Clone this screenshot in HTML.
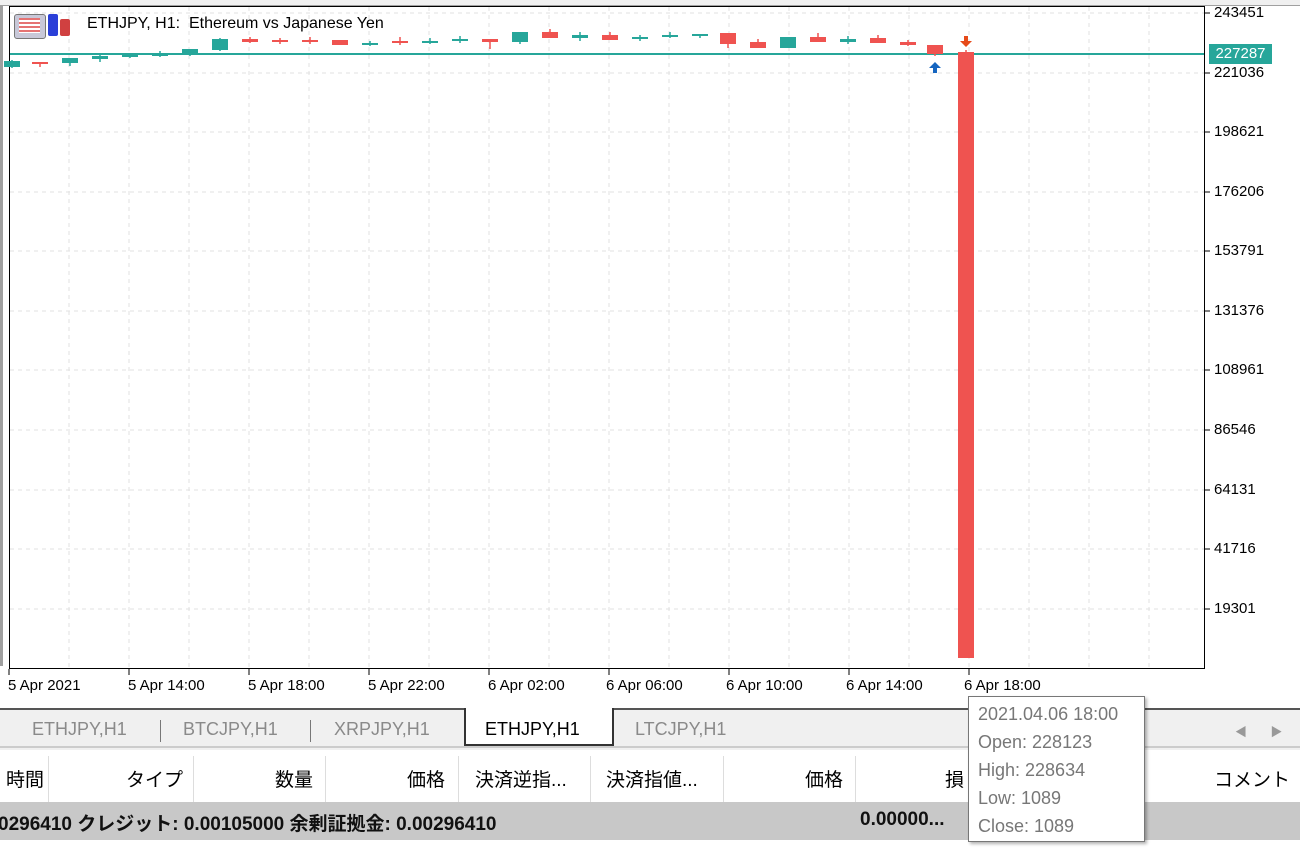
<!DOCTYPE html><html><head><meta charset="utf-8"><style>
body{margin:0;width:1300px;height:849px;overflow:hidden;background:#fff;font-family:"Liberation Sans","Noto Sans CJK JP",sans-serif;position:relative}
.a{position:absolute;white-space:nowrap}
.pl{position:absolute;left:1214px;font-size:15px;color:#000}
.tl{position:absolute;top:677px;font-size:15px;color:#000}
.tab{position:absolute;top:719px;font-size:18px;color:#8a8a8a}
.th{position:absolute;top:765px;font-size:19px;color:#000;white-space:nowrap}
.thr{position:absolute;top:765px;font-size:19px;color:#000;white-space:nowrap;text-align:right;width:200px}
.sep{position:absolute;top:756px;width:1px;height:46px;background:#ddd}
</style></head><body>
<div class="a" style="left:0;top:0;width:1300px;height:5px;background:#f0f0f0;border-bottom:1px solid #a0a0a0"></div>
<div class="a" style="left:0;top:6px;width:3px;height:660px;background:#a0a0a0"></div>
<svg class="a" style="left:0;top:0" width="1300" height="710">
<g stroke="#e2e2e2" stroke-dasharray="4,4" stroke-width="1">
<path d="M10 13H1204M10 73H1204M10 132H1204M10 192H1204M10 251H1204M10 311H1204M10 370H1204M10 430H1204M10 490H1204M10 549H1204M10 609H1204"/>
<path d="M69 7V667M129 7V667M189 7V667M249 7V667M309 7V667M369 7V667M429 7V667M489 7V667M549 7V667M609 7V667M669 7V667M729 7V667M789 7V667M849 7V667M909 7V667M969 7V667M1029 7V667M1089 7V667M1149 7V667"/>
</g>
<rect x="9.5" y="6.5" width="1195" height="662" fill="none" stroke="#000"/>
<g stroke="#000"><path d="M1205 13h5M1205 73h5M1205 132h5M1205 192h5M1205 251h5M1205 311h5M1205 370h5M1205 430h5M1205 490h5M1205 549h5M1205 609h5"/>
<path d="M9 669v6M129 669v6M249 669v6M369 669v6M489 669v6M609 669v6M729 669v6M849 669v6M969 669v6"/></g>
<line x1="10" y1="54" x2="1204" y2="54" stroke="#26a69a" stroke-width="2"/>
<g id="c"></g>
</svg>
<script>
var d=[[12,'g',61,67,60,68],[40,'r',62,63,62,67],[70,'g',58,63,58,66],[100,'g',56,59,54,62],[130,'g',55,57,55,58],[160,'g',54,55,51,57],[190,'g',49,55,49,56],[220,'g',39,50,38,51],[250,'r',39,42,37,43],[280,'r',40,41,38,44],[310,'r',40,41,37,44],[340,'r',40,45,40,45],[370,'g',43,45,41,46],[400,'r',41,42,37,45],[430,'g',41,43,38,44],[460,'g',39,41,36,43],[490,'r',39,42,39,49],[520,'g',32,42,32,44],[550,'r',32,38,29,38],[580,'g',35,38,32,41],[610,'r',35,40,32,40],[640,'g',37,39,35,41],[670,'g',35,37,32,38],[700,'g',34,36,34,38],[728,'r',33,44,33,48],[758,'r',42,48,39,48],[788,'g',37,48,37,48],[818,'r',37,42,33,42],[848,'g',39,42,36,44],[878,'r',38,43,35,43],[908,'r',42,45,40,46],[935,'r',45,54,45,56],[966,'r',52,658,50,658]];
var s='';d.forEach(function(c){var col=c[1]=='g'?'#26a69a':'#ef5350';s+='<line x1="'+c[0]+'" x2="'+c[0]+'" y1="'+c[4]+'" y2="'+c[5]+'" stroke="'+col+'" stroke-width="1.5"/><rect x="'+(c[0]-8)+'" y="'+c[2]+'" width="16" height="'+Math.max(2,c[3]-c[2])+'" fill="'+col+'"/>';});
s+='<path d="M935 62l-6 6h4v5h4v-5h4z" fill="#1565c0"/><path d="M966 47l-6-6h4v-5h4v5h4z" fill="#e64a19"/>';
document.getElementById('c').innerHTML=s;
</script>
<div class="a" style="left:1209px;top:44px;width:63px;height:20px;background:#26a69a;color:#fff;font-size:15px;line-height:20px;text-align:center">227287</div>
<div class="pl" style="top:4px">243451</div><div class="pl" style="top:64px">221036</div><div class="pl" style="top:123px">198621</div><div class="pl" style="top:183px">176206</div><div class="pl" style="top:242px">153791</div><div class="pl" style="top:302px">131376</div><div class="pl" style="top:361px">108961</div><div class="pl" style="top:421px">86546</div><div class="pl" style="top:481px">64131</div><div class="pl" style="top:540px">41716</div><div class="pl" style="top:600px">19301</div>
<div class="tl" style="left:8px">5 Apr 2021</div><div class="tl" style="left:128px">5 Apr 14:00</div><div class="tl" style="left:248px">5 Apr 18:00</div><div class="tl" style="left:368px">5 Apr 22:00</div><div class="tl" style="left:488px">6 Apr 02:00</div><div class="tl" style="left:606px">6 Apr 06:00</div><div class="tl" style="left:726px">6 Apr 10:00</div><div class="tl" style="left:846px">6 Apr 14:00</div><div class="tl" style="left:964px">6 Apr 18:00</div>
<div class="a" style="left:14px;top:14px;width:30px;height:23px;background:#c8c8d8;border:1px solid #777;border-radius:3px"></div>
<div class="a" style="left:19px;top:18px;width:21px;height:15px;background:repeating-linear-gradient(#e57373 0 2px,#fff 2px 4px)"></div>
<div class="a" style="left:48px;top:14px;width:10px;height:22px;background:#2a3fd8;border-radius:2px"></div>
<div class="a" style="left:60px;top:19px;width:10px;height:17px;background:#d04040;border-radius:2px"></div>
<div class="a" style="left:87px;top:15px;font-size:16px">ETHJPY, H1:&nbsp; Ethereum vs Japanese Yen</div>
<div class="a" style="left:0;top:708px;width:1300px;height:40px;background:#f0f0f0;border-top:2px solid #555"></div>
<div class="a" style="left:0;top:746px;width:1300px;height:2px;background:#ccc"></div>
<div class="a" style="left:464px;top:708px;width:146px;height:36px;background:#fff;border:2px solid #333;border-top:none"></div>
<div class="tab" style="left:32px">ETHJPY,H1</div><div class="a" style="left:160px;top:720px;width:1px;height:22px;background:#777"></div>
<div class="tab" style="left:183px">BTCJPY,H1</div><div class="a" style="left:310px;top:720px;width:1px;height:22px;background:#777"></div>
<div class="tab" style="left:334px">XRPJPY,H1</div>
<div class="tab" style="left:485px;color:#000">ETHJPY,H1</div>
<div class="tab" style="left:635px">LTCJPY,H1</div>
<div class="a" style="left:1235px;top:723px;font-size:12px;color:#999">◀&nbsp;&nbsp;&nbsp;&nbsp;&nbsp;&nbsp;&nbsp;▶</div>
<div class="a" style="left:0;top:756px;width:1300px;height:46px;background:#fff"></div>
<div class="sep" style="left:48px"></div><div class="sep" style="left:193px"></div><div class="sep" style="left:325px"></div><div class="sep" style="left:458px"></div><div class="sep" style="left:590px"></div><div class="sep" style="left:723px"></div><div class="sep" style="left:855px"></div>
<div class="th" style="left:6px">時間</div>
<div class="thr" style="left:-17px">タイプ</div>
<div class="thr" style="left:113px">数量</div>
<div class="thr" style="left:245px">価格</div>
<div class="th" style="left:475px">決済逆指...</div>
<div class="th" style="left:606px">決済指値...</div>
<div class="thr" style="left:643px">価格</div>
<div class="th" style="left:945px">損</div>
<div class="thr" style="left:1090px">コメント</div>
<div class="a" style="left:0;top:802px;width:1300px;height:38px;background:#c8c8c8"></div>
<div class="a" style="left:-2px;top:809px;font-size:19px;font-weight:bold;color:#111">0296410 クレジット: 0.00105000 余剰証拠金: 0.00296410</div>
<div class="a" style="left:860px;top:809px;font-size:19px;font-weight:bold;color:#111">0.00000...</div>
<div class="a" style="left:968px;top:696px;width:177px;height:146px;background:#fff;border:1px solid #777;box-shadow:2px 2px 3px rgba(0,0,0,.3);font-size:18px;color:#777;line-height:28px;padding:3px 0 0 9px;box-sizing:border-box">2021.04.06 18:00<br>Open: 228123<br>High: 228634<br>Low: 1089<br>Close: 1089</div>
</body></html>
